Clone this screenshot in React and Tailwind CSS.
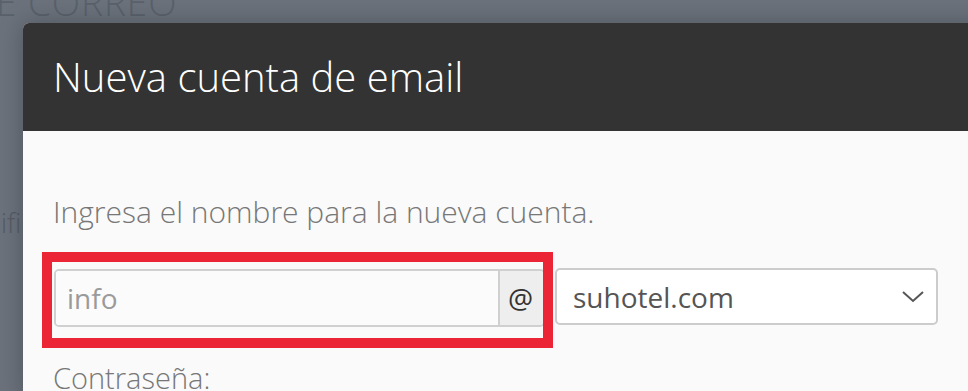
export default function App() {
  return (
    <div
      className="relative h-[391px] w-full overflow-hidden bg-[#6b727c]"
      style={{ fontFamily: '"Open Sans", "Noto Sans", sans-serif' }}
    >
      {/* PAGE BEHIND THE OVERLAY */}

      <div className="-mt-[17px] -ml-[4px] h-[38px] text-[37px] font-light leading-none tracking-wide text-[#5a616b]">
        E CORREO
      </div>

      <div className="mt-[182px] ml-[1px] text-[27px] font-light text-[#555c66]">ifi</div>

      {/* MODAL */}

      <div className="absolute left-[23px] top-[23px] w-[1000px] overflow-hidden rounded-tl-[6px] bg-[#fafafa] shadow-[0_0_24px_rgba(0,0,0,0.25)]">
        <div className="flex h-[108px] items-center bg-[#333333] pl-[30px]">
          <h2 className="text-[40px] font-light text-white">Nueva cuenta de email</h2>
        </div>

        <div className="pl-[30px] pt-[64px]">
          <p className="text-[30px] font-light leading-[34px] text-[#777777]">
            Ingresa el nombre para la nueva cuenta.
          </p>

          <div className="mt-[39px] flex items-start gap-[10px]">
            <div className="ml-[1px] mt-[1px] flex h-[58px] w-[491px] overflow-hidden rounded-[5px] border-2 border-[#d0d0d0]">
              <div className="flex flex-1 items-center bg-[#fbfbfb] pl-[11px] text-[28px] text-[#9a9a9a]">
                info
              </div>
              <div className="flex w-[45px] items-center justify-center border-l-2 border-[#d0d0d0] bg-[#eeeeee] pr-[2px] text-[28px] text-[#333333]">
                @
              </div>
            </div>

            <div className="flex h-[57px] w-[383px] items-center justify-between rounded-[5px] border-2 border-[#cccccc] bg-white pl-[16px] pr-[12px]">
              <span className="text-[28px] text-[#555555]">suhotel.com</span>
              <svg width="22" height="12" viewBox="0 0 22 12" fill="none" stroke="#555" strokeWidth="2">
                <path d="M1 1l10 9 10-9" />
              </svg>
            </div>
          </div>

          <p className="mt-[29px] text-[29px] font-light text-[#777777]">Contraseña:</p>
        </div>
      </div>

      {/* RED HIGHLIGHT */}

      <div className="absolute left-[42px] top-[252px] h-[96px] w-[511px] border-[10px] border-[#ec2536]" />
    </div>
  );
}
